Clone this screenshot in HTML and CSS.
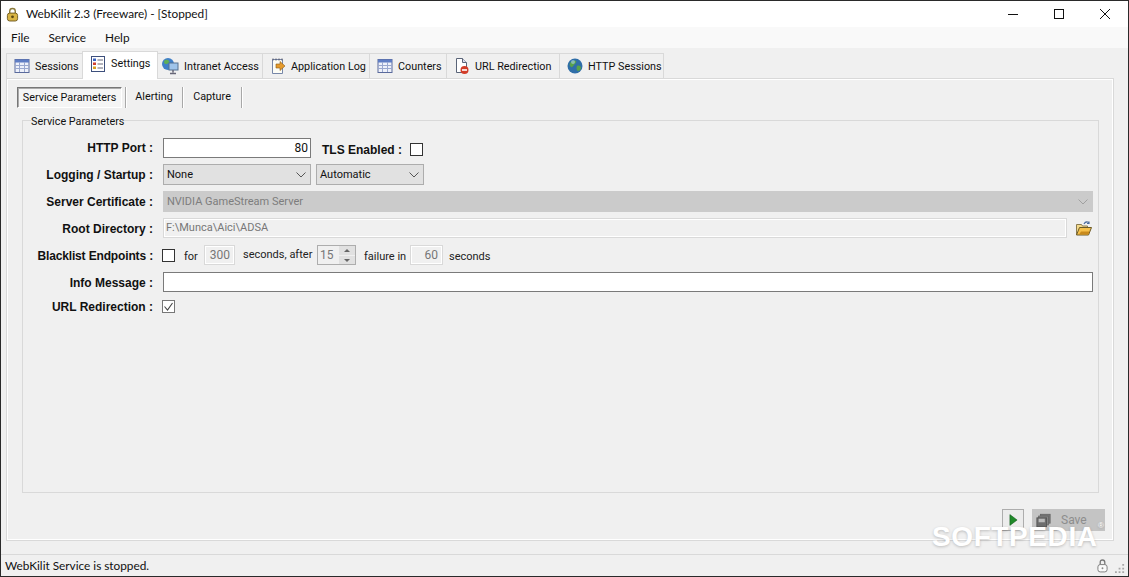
FILE: index.html
```html
<!DOCTYPE html>
<html lang="en">
<head>
<meta charset="utf-8">
<title>WebKilit 2.3</title>
<link rel="stylesheet" href="styles.css">
</head>
<body>
<svg class="defs" width="0" height="0">
  <symbol id="grid" viewBox="0 0 16 16">
    <rect x="1" y="1.500" width="14" height="13" fill="#eef1fa" stroke="#5a6a9c"/>
    <rect x="1" y="1.500" width="14" height="3" fill="#5f7dc4"/>
    <path d="M1 7.500h14M1 10.500h14M5.500 4v10M10.500 4v10" stroke="#9aa8cf" fill="none"/>
  </symbol>
</svg>
<div class="window">
  <header class="titlebar">
    <svg class="app-icon" viewBox="0 0 14 16"><path d="M4 7V4.500a3 3 0 0 1 6 0V7" fill="none" stroke="#8a7a3a" stroke-width="1.500"/><rect x="1.500" y="6.500" width="11" height="8.500" rx="2.500" fill="#d9b545" stroke="#6e5a20"/><circle cx="7" cy="10.500" r="1.500" fill="#5a4712"/></svg>
    <span class="title">WebKilit 2.3 (Freeware) - [Stopped]</span>
    <div class="winbtns">
      <svg viewBox="0 0 10 10"><path d="M0 5.500h10" stroke="#111" fill="none"/></svg>
      <svg viewBox="0 0 10 10"><rect x=".5" y=".5" width="9" height="9" fill="none" stroke="#111"/></svg>
      <svg viewBox="0 0 10 10"><path d="M0 0l10 10M10 0L0 10" stroke="#111" fill="none"/></svg>
    </div>
  </header>
  <nav class="menubar"><span>File</span><span>Service</span><span>Help</span></nav>
  <main class="main">
    <div class="tabs">
      <div class="tab"><svg class="ico"><use href="#grid"/></svg>Sessions</div>
      <div class="tab active">
        <svg class="ico" viewBox="0 0 16 16"><rect x="1.500" y=".5" width="13" height="15" fill="#fff" stroke="#3d4f7c"/><rect x="3" y="2.500" width="3" height="2.500" fill="#3a62c0"/><rect x="3" y="6.500" width="3" height="2.500" fill="#d04030"/><rect x="3" y="10.500" width="3" height="2.500" fill="#d8a020"/><path d="M7.500 4h5.500M7.500 8h5.500M7.500 12h5.500" stroke="#667"/></svg>
        Settings
      </div>
      <div class="tab narrow">
        <svg class="ico wide" viewBox="0 0 18 18"><circle cx="7" cy="7" r="6" fill="#3f7fc8"/><path d="M3 4c2-2 4-1 5 0s-1 3-3 3-2-2-2-3zM8 9c2-1 3 0 3 1l-3 2z" fill="#5fae58"/><rect x="8" y="6" width="9" height="7" fill="#9fc4ea" stroke="#54708f"/><path d="M12 13v2.500M9 16.500h6" stroke="#667" stroke-width="1.500"/></svg>
        Intranet Access
      </div>
      <div class="tab">
        <svg class="ico" viewBox="0 0 16 16"><path d="M2.500 1.500h10v14h-10z" fill="#fdfdf6" stroke="#7787a8"/><path d="M3 .5v2M6 .5v2M9 .5v2M12 .5v2" stroke="#556"/><path d="M6 6h4V3.500L15 8l-5 4.500V10H6z" fill="#e59a2c" stroke="#8a5a14" stroke-width=".6"/></svg>
        Application Log
      </div>
      <div class="tab"><svg class="ico"><use href="#grid"/></svg>Counters</div>
      <div class="tab">
        <svg class="ico" viewBox="0 0 16 16"><path d="M2.500 .5h6l4 4v10h-10z" fill="#fff" stroke="#5a6478"/><path d="M8.500 .5v4h4" fill="#dde" stroke="#5a6478"/><circle cx="10.500" cy="12" r="4" fill="#d23c28"/><path d="M8 12h5" stroke="#fff" stroke-width="1.600"/></svg>
        URL Redirection
      </div>
      <div class="tab">
        <svg class="ico" viewBox="0 0 16 16"><circle cx="8" cy="8" r="7.500" fill="#2f6ea8"/><path d="M3 5c2-3 5-3 6-2s-1 3-2 4-2 3-3 2-2-2-1-4zM10 8c2-1 4 0 4 2s-2 3-3 3-2-3-1-5z" fill="#58a24a"/><circle cx="6" cy="4" r="2" fill="#a9d0ee" opacity=".6"/></svg>
        HTTP Sessions
      </div>
    </div>
    <section class="panel">
      <div class="strip">
        <span class="strip-btn selected">Service Parameters</span><i class="sep"></i>
        <span class="strip-btn alerting">Alerting</span><i class="sep"></i>
        <span class="strip-btn capture">Capture</span><i class="sep"></i>
      </div>
      <fieldset class="group">
        <legend>Service Parameters</legend>
        <div class="form">
        <div class="row first">
          <label class="lbl">HTTP Port :</label>
          <div class="field port">80</div>
          <b class="tls">TLS Enabled :</b>
          <span class="check tls-check"></span>
        </div>
        <div class="row">
          <label class="lbl">Logging / Startup :</label>
          <div class="select sel-log">None<svg class="chev" viewBox="0 0 10 6"><path d="M.5 .5L5 5 9.500 .5" fill="none" stroke="#555"/></svg></div>
          <div class="select sel-start">Automatic<svg class="chev" viewBox="0 0 10 6"><path d="M.5 .5L5 5 9.500 .5" fill="none" stroke="#555"/></svg></div>
        </div>
        <div class="row">
          <label class="lbl">Server Certificate :</label>
          <div class="select disabled grow">NVIDIA GameStream Server<svg class="chev" viewBox="0 0 10 6"><path d="M.5 .5L5 5 9.500 .5" fill="none" stroke="#a0a0a0"/></svg></div>
        </div>
        <div class="row">
          <label class="lbl">Root Directory :</label>
          <div class="field off root">F:\Munca\Aici\ADSA</div>
          <svg class="folder" viewBox="0 0 16 15"><path d="M.5 14V3.500h5l1 1.500h5v2" fill="#f3d98a" stroke="#8b7b50"/><path d="M.5 14l3-7.500h12l-3 7.500z" fill="#f6c04a" stroke="#6b5a28"/><path d="M3 13.500l2-3h8.500l-1 3z" fill="#c98a1c"/><path d="M8 3c1-2 3-2.500 5-1.500M13 .5v2h-2" fill="none" stroke="#4a6a9c" stroke-width="1.200"/></svg>
        </div>
        <div class="row black">
          <label class="lbl">Blacklist Endpoints :</label>
          <span class="check"></span>
          <span class="t t-for">for</span>
          <div class="field off num n300">300</div>
          <span class="t t-sec">seconds, after</span>
          <div class="spin"><span>15</span><div class="arrows"><i class="up"></i><i class="down"></i></div></div>
          <span class="t t-fail">failure in</span>
          <div class="field off num n60">60</div>
          <span class="t t-end">seconds</span>
        </div>
        <div class="row">
          <label class="lbl">Info Message :</label>
          <div class="field grow"></div>
        </div>
        <div class="row url">
          <label class="lbl">URL Redirection :</label>
          <span class="check checked"><svg viewBox="0 0 13 13"><path d="M2.500 6.500l3 3.500 5-7" fill="none" stroke="#444" stroke-width="1.100"/></svg></span>
        </div>
        </div>
      </fieldset>
      <div class="actions">
        <div class="play"><svg viewBox="0 0 10 14"><path d="M1 1l8 6-8 6z" fill="#1f8a2a" stroke="#145c1c" stroke-width=".6"/></svg></div>
        <div class="save">
          <svg viewBox="0 0 17 16"><rect x="5" y="1" width="11" height="10" fill="#777" stroke="#666"/><rect x="3" y="3" width="11" height="10" fill="#8c8c8c" stroke="#666"/><rect x="1" y="5" width="11" height="10" fill="#6e6e6e" stroke="#555"/><rect x="3" y="6" width="7" height="4" fill="#bbb"/></svg>
          <span>Save</span>
        </div>
      </div>
    </section>
  </main>
  <footer class="status">
    <span>WebKilit Service is stopped.</span>
    <svg class="status-lock" viewBox="0 0 12 15"><path d="M3.500 7V4a2.500 2.500 0 0 1 5 0v3" fill="none" stroke="#777" stroke-width="1.400"/><rect x="1" y="6.500" width="10" height="8" rx="2.500" fill="#fafafa" stroke="#777"/><circle cx="6" cy="10.500" r="1" fill="#888"/></svg>
    <svg class="grip" viewBox="0 0 11 11"><path d="M8 0h2v2H8zM4 4h2v2H4zM8 4h2v2H8zM0 8h2v2H0zM4 8h2v2H4zM8 8h2v2H8z" fill="#a8a8a8"/></svg>
  </footer>
  <div class="watermark">SOFTPEDIA<sup>®</sup></div>
</div>
</body>
</html>
```
FILE: styles.css
```css
* { box-sizing: border-box; }
html, body { margin: 0; padding: 0; }
body { font-family: Roboto, "Liberation Sans", Arial, sans-serif; font-size: 11px; color: #111; overflow: hidden; }
.defs { position: absolute; }
.window { position: relative; width: 1129px; height: 577px; border: 1px solid #2a2a2a; background: #f0f0f0; display: flex; flex-direction: column; overflow: hidden; }

.titlebar { height: 26px; flex: none; background: #fff; display: flex; align-items: center; padding-left: 5px; }
.app-icon { width: 13px; height: 15px; margin-right: 7px; }
.title { font: 11.8px Lato, "Liberation Sans", sans-serif; color: #111; margin-top: -1px; }
.winbtns { margin-left: auto; display: flex; gap: 36px; padding-right: 18px; }
.winbtns svg { width: 10px; height: 10px; }

.menubar { height: 21px; flex: none; background: #f9f9f9; display: flex; align-items: center; padding-left: 10px; gap: 19px; font: 11.8px Lato, "Liberation Sans", sans-serif; }

.main { flex: 1; display: flex; flex-direction: column; padding: 3px 14px 0 5px; min-height: 0; }
.tabs { height: 27px; flex: none; display: grid; grid-template-columns: 76px 75px 105px 107px 77px 113px 105px; align-items: end; width: max-content; position: relative; z-index: 1; font-size: 10.8px; }
.tab { height: 25px; display: flex; align-items: center; gap: 5px; padding-left: 7px; border: 1px solid #d9d9d9; border-right: 0; border-bottom: 0; white-space: nowrap; background: #f0f0f0; }
.tab:last-child { border-right: 1px solid #d9d9d9; }
.tab.active { height: 28px; margin-bottom: -1px; background: #fff; border-right: 1px solid #d9d9d9; margin-right: -1px; position: relative; padding-bottom: 4px; }
.tab.narrow { padding-left: 3px; }
.ico { width: 16px; height: 16px; flex: none; }
.ico.wide { width: 18px; height: 18px; }

.panel { height: 463px; flex: none; border: 1px solid #d9d9d9; box-shadow: inset 0 0 0 1px #fff; padding: 7px 14px 0 15px; position: relative; }

.strip { height: 23px; display: flex; align-items: center; padding-left: 1px; margin-left: -6px; font-size: 10.8px; }
.strip-btn { height: 21px; display: flex; align-items: center; white-space: nowrap; }
.strip-btn.selected { width: 105px; justify-content: center; background: #f5f5f5; border: 1px solid; border-color: #777 #fff #fff #777; box-shadow: inset 1px 1px 0 #aaa; margin-right: 3px; }
.strip-btn.alerting { width: 56px; justify-content: center; margin-bottom: 2px; }
.strip-btn.capture { width: 58px; justify-content: center; margin-bottom: 2px; }
.sep { width: 1px; height: 21px; background: #a8a8a8; box-shadow: 1px 0 0 #fff; }

.group { margin: 5px 0 0 0; padding: 0; width: 1077px; height: 379px; border: 1px solid #d9d9d9; min-width: 0; }
.group legend { margin-left: 8px; padding: 0; height: 13px; line-height: 15px; font-size: 10.8px; }
.form { padding: 11px 5px 0 140px; }

.row { height: 27px; display: flex; align-items: flex-start; position: relative; }
.row.first { height: 26px; }
.lbl { position: absolute; right: 100%; width: 140px; text-align: right; font: bold 12px "Liberation Sans", Arial, sans-serif; top: 4px; padding-right: 10px; white-space: nowrap; }
.first .lbl { top: 3px; }
.black .lbl { letter-spacing: -.15px; }
.field { height: 20px; background: #fff; border: 1px solid #7a7a7a; padding: 0 2px; line-height: 18px; }
.field.port { width: 148px; text-align: right; font-size: 12px; }
.field.grow, .select.grow { flex: 1; }
.field.off { background: #f0f0f0; border-color: #d9d9d9; color: #777; box-shadow: inset 0 0 0 1px #fff; }
.root { width: 904px; }
.tls { width: 80px; margin: 5px 8px 0 11px; white-space: nowrap; font: bold 12px "Liberation Sans", Arial, sans-serif; }
.check { width: 13px; height: 13px; border: 1px solid #333; background: #fff; margin-top: 5px; flex: none; position: relative; }
.check svg { position: absolute; left: -1px; top: -1px; width: 13px; height: 13px; }
.check.checked { border-color: #777; }
.select { height: 21px; background: #e1e1e1; border: 1px solid #adadad; padding-left: 3px; line-height: 20px; position: relative; }
.sel-log { width: 148px; margin-right: 5px; }
.sel-start { width: 108px; }
.select.disabled { background: #cbcbcb; border-color: #cbcbcb; color: #7d7d7d; line-height: 19px; }
.chev { position: absolute; right: 4px; top: 7px; width: 10px; height: 6px; }
.folder { width: 16px; height: 15px; margin: 3px 0 0 9px; }

.black .check { margin-left: -1px; margin-top: 4px; }
.t { margin-top: 5px; white-space: nowrap; color: #222; }
.t-for { width: 20px; margin-left: 9px; }
.num { text-align: right; padding-right: 4px; font-size: 12px; }
.n300 { width: 31px; }
.n60 { width: 33px; }
.t-sec { width: 74px; margin: 3px 0 0 8px; }
.t-fail { width: 46px; margin: 5px 0 0 8px; }
.t-end { margin-left: 6px; }
.spin { width: 39px; height: 20px; border: 1px solid #adadad; display: flex; color: #777; padding-left: 2px; line-height: 18px; justify-content: space-between; font-size: 12px; }
.arrows { width: 16px; display: flex; flex-direction: column; gap: 1px; }
.arrows i { flex: 1; background: #e1e1e1; position: relative; }
.arrows i::after { content: ""; position: absolute; left: 5px; top: 3px; border: 3px solid transparent; border-top: 0; border-bottom: 3px solid #666; }
.arrows i.down::after { border-bottom: 0; border-top: 3px solid #666; }
.url .lbl { top: 1px; }
.url .check { margin: 1px 0 0 -1px; }

.actions { display: flex; justify-content: flex-end; gap: 8px; margin: 16px -6px 0 0; }
.play { width: 22px; height: 22px; border: 1px solid #adadad; background: #ececec; display: flex; align-items: center; justify-content: center; }
.play svg { width: 9px; height: 14px; }
.save { width: 73px; height: 22px; background: #c4c4c4; border: 1px solid #c4c4c4; color: #8d8d8d; display: flex; align-items: center; padding-left: 3px; font-size: 12px; }
.save svg { width: 15px; height: 15px; }
.save span { margin-left: 10px; }

.status { height: 22px; flex: none; margin-top: 13px; border-top: 1px solid #d9d9d9; background: #f0f0f0; display: flex; align-items: center; padding-left: 4px; font: 11.8px Lato, "Liberation Sans", sans-serif; }
.status-lock { width: 11px; height: 15px; margin-left: auto; }
.grip { width: 10px; height: 10px; margin: 7px 3px 0 7px; }

.watermark { position: absolute; left: 931px; top: 520px; font: bold 28px/32px "Liberation Sans", Arial, sans-serif; letter-spacing: .6px; color: #fff; text-shadow: 0 1px 3px rgba(0,0,0,.22); white-space: nowrap; }
.watermark sup { font-size: 8px; font-weight: normal; position: absolute; top: -11px; left: 166px; line-height: 32px; }
```
